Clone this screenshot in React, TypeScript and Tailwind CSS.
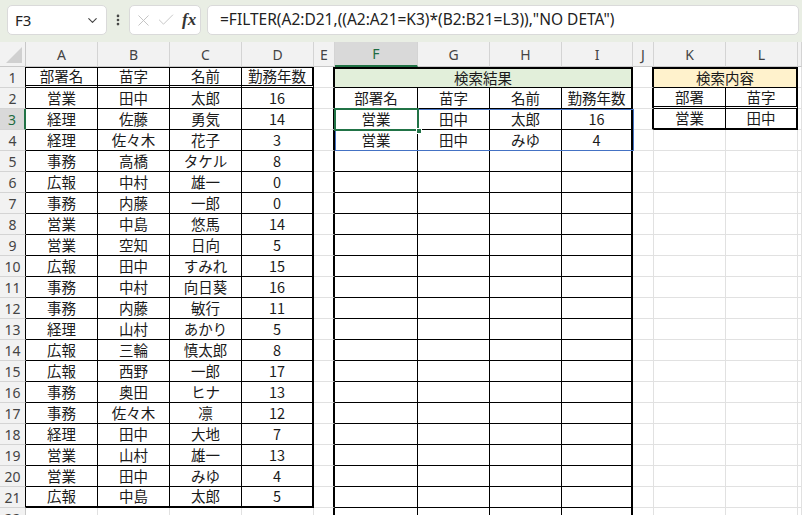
import { Check, ChevronDown, EllipsisVertical, X } from "lucide-react";

const letters = ["A", "B", "C", "D", "E", "F", "G", "H", "I", "J", "K", "L", ""];

const staff = [
  ["部署名", "苗字", "名前", "勤務年数"],
  ["営業", "田中", "太郎", "16"],
  ["経理", "佐藤", "勇気", "14"],
  ["経理", "佐々木", "花子", "3"],
  ["事務", "高橋", "タケル", "8"],
  ["広報", "中村", "雄一", "0"],
  ["事務", "内藤", "一郎", "0"],
  ["営業", "中島", "悠馬", "14"],
  ["営業", "空知", "日向", "5"],
  ["広報", "田中", "すみれ", "15"],
  ["事務", "中村", "向日葵", "16"],
  ["事務", "内藤", "敏行", "11"],
  ["経理", "山村", "あかり", "5"],
  ["広報", "三輪", "慎太郎", "8"],
  ["広報", "西野", "一郎", "17"],
  ["事務", "奥田", "ヒナ", "13"],
  ["事務", "佐々木", "凛", "12"],
  ["経理", "田中", "大地", "7"],
  ["営業", "山村", "雄一", "13"],
  ["営業", "田中", "みゆ", "4"],
  ["広報", "中島", "太郎", "5"],
];

const result: Record<number, string[]> = {
  2: ["部署名", "苗字", "名前", "勤務年数"],
  3: ["営業", "田中", "太郎", "16"],
  4: ["営業", "田中", "みゆ", "4"],
};

const search: Record<number, string[]> = {
  2: ["部署", "苗字"],
  3: ["営業", "田中"],
};

const grey = "border-r border-r-[#e1e1e1]";
const thin = "border-r border-r-black";
const thick = "border-r-2 border-r-black";

function right(r: number, c: number) {
  if (c <= 2 && r <= 21) return thin;
  if (c === 3 && r <= 21) return thick;
  if (c === 4) return thick;
  if (c >= 5 && c <= 7) return thin;
  if (c === 8) return thick;
  if (c === 9 && r <= 3) return thick;
  if (c === 10 && r <= 3) return thin;
  if (c === 11 && r <= 3) return thick;
  return grey;
}

function bottom(r: number, c: number) {
  if (c <= 3) {
    if (r === 1) return "border-b-[3px] border-b-black [border-bottom-style:double]";
    if (r < 21) return "border-b border-b-black";
    if (r === 21) return "border-b-2 border-b-black";
  }
  if (c >= 5 && c <= 8) return "border-b border-b-black";
  if (c === 10 || c === 11) {
    if (r === 1) return "border-b border-b-black";
    if (r === 2) return "border-b-[3px] border-b-black [border-bottom-style:double]";
    if (r === 3) return "border-b-2 border-b-black";
  }
  return "border-b border-b-[#e1e1e1]";
}

function top(r: number, c: number) {
  if (r !== 1) return "";
  if (c <= 3) return "border-t border-t-black";
  if ((c >= 5 && c <= 8) || c === 10 || c === 11) return "border-t-2 border-t-black";
  return "";
}

function value(r: number, c: number) {
  if (c <= 3) return staff[r - 1]?.[c] ?? "";
  if (c >= 5 && c <= 8) return result[r]?.[c - 5] ?? "";
  if (c === 10 || c === 11) return search[r]?.[c - 10] ?? "";
  return "";
}

const cellBase =
  "flex items-center justify-center whitespace-nowrap text-[14.5px] leading-none text-[#1a1a1a] font-['Noto_Sans_CJK_JP',sans-serif]";

function Row({ r }: { r: number }) {
  const cells = [];
  for (let c = 0; c < letters.length; c++) {
    if (r === 1 && (c === 6 || c === 7 || c === 8 || c === 11)) continue;
    if (r === 1 && c === 5) {
      cells.push(
        <div key={c} className={`${cellBase} col-span-4 bg-[#e2efda] ${right(1, 8)} ${bottom(1, 5)} ${top(1, 5)}`}>
          検索結果
        </div>
      );
      continue;
    }
    if (r === 1 && c === 10) {
      cells.push(
        <div key={c} className={`${cellBase} col-span-2 bg-[#fff2cc] ${right(1, 11)} ${bottom(1, 10)} ${top(1, 10)}`}>
          検索内容
        </div>
      );
      continue;
    }
    cells.push(
      <div key={c} className={`${cellBase} bg-white ${right(r, c)} ${bottom(r, c)} ${top(r, c)}`}>
        {value(r, c)}
      </div>
    );
  }
  const sel = r === 3;
  return (
    <>
      <div
        className={`flex items-center justify-center border-b border-b-[#d4d4d4] text-[14px] font-['Noto_Sans',sans-serif] ${
          sel
            ? "bg-[#d9d9d9] text-[#1e6b41] border-r-2 border-r-[#217346]"
            : r <= 21
            ? "bg-[#f2f2f2] text-[#444] border-r border-r-black"
            : "bg-[#f2f2f2] text-[#444] border-r border-r-[#c8c8c8]"
        }`}
      >
        {r}
      </div>
      {cells}
    </>
  );
}

export default function App() {
  const rows = Array.from({ length: 22 }, (_, i) => i + 1);
  return (
    <div className="h-[515px] w-[802px] overflow-hidden bg-white">
      <div className="flex h-[42px] items-start bg-[#e9eee4] pt-[5px]">
        <div className="ml-[7px] flex h-[30px] w-[100px] items-center justify-between rounded-[5px] border border-[#dadada] bg-white pl-[7px] pr-[6px]">
          <span className="text-[15px] text-[#222] font-['Noto_Sans',sans-serif]">F3</span>
          <ChevronDown size={15} strokeWidth={1.8} className="text-[#444]" />
        </div>
        <div className="flex h-[30px] w-[22px] items-center justify-center">
          <EllipsisVertical size={14} strokeWidth={2.6} className="text-[#444]" />
        </div>
        <div className="flex h-[30px] w-[72px] items-center rounded-[5px] border border-[#dadada] bg-white pl-[4px]">
          <X size={19} strokeWidth={1.2} className="text-[#c2c2c2]" />
          <Check size={20} strokeWidth={1.2} className="ml-[3px] text-[#c8c8c8]" />
          <span className="ml-[6px] text-[17px] italic font-semibold text-[#333] font-['Liberation_Serif',serif]">fx</span>
        </div>
        <div className="ml-[6px] flex h-[30px] w-[592px] items-center rounded-[5px] border border-[#dadada] bg-white pl-[12px]">
          <span className="text-[15.5px] text-[#222] font-['Noto_Sans',sans-serif]">
            =FILTER(A2:D21,((A2:A21=K3)*(B2:B21=L3)),"NO DETA")
          </span>
        </div>
      </div>

      <div className="relative grid grid-cols-[26px_72px_72px_72px_72px_21px_83px_72px_72px_71px_21px_72px_72px_1fr] grid-rows-[25px_repeat(22,21px)]">
        <div className="relative border-b border-r border-[#c8c8c8] bg-[#f2f2f2]">
          <svg className="absolute bottom-[3px] right-[3px]" width="16" height="16" viewBox="0 0 16 16">
            <polygon points="16,0 16,16 0,16" fill="#d0d0d0" />
          </svg>
        </div>
        {letters.map((l, i) =>
          i === 5 ? (
            <div
              key={i}
              className="flex items-center justify-center border-b-2 border-r border-b-[#217346] border-r-[#d4d4d4] bg-[#d9d9d9] text-[14px] text-[#1e6b41] font-['Noto_Sans',sans-serif]"
            >
              {l}
            </div>
          ) : (
            <div
              key={i}
              className="flex items-center justify-center border-b border-r border-b-[#c8c8c8] border-r-[#d4d4d4] bg-[#f2f2f2] text-[14px] text-[#444] font-['Noto_Sans',sans-serif]"
            >
              {l}
            </div>
          )
        )}
        {rows.map((r) => (
          <Row key={r} r={r} />
        ))}

        <div className="pointer-events-none absolute left-[335px] top-[67px] h-[42px] w-[299px] border border-[#4472c4]" />
        <div className="pointer-events-none absolute left-[334px] top-[66px] h-[23px] w-[85px] border-2 border-[#217346]" />
        <div className="pointer-events-none absolute left-[416px] top-[86px] h-[6px] w-[6px] border border-white bg-[#217346]" />
      </div>
    </div>
  );
}
